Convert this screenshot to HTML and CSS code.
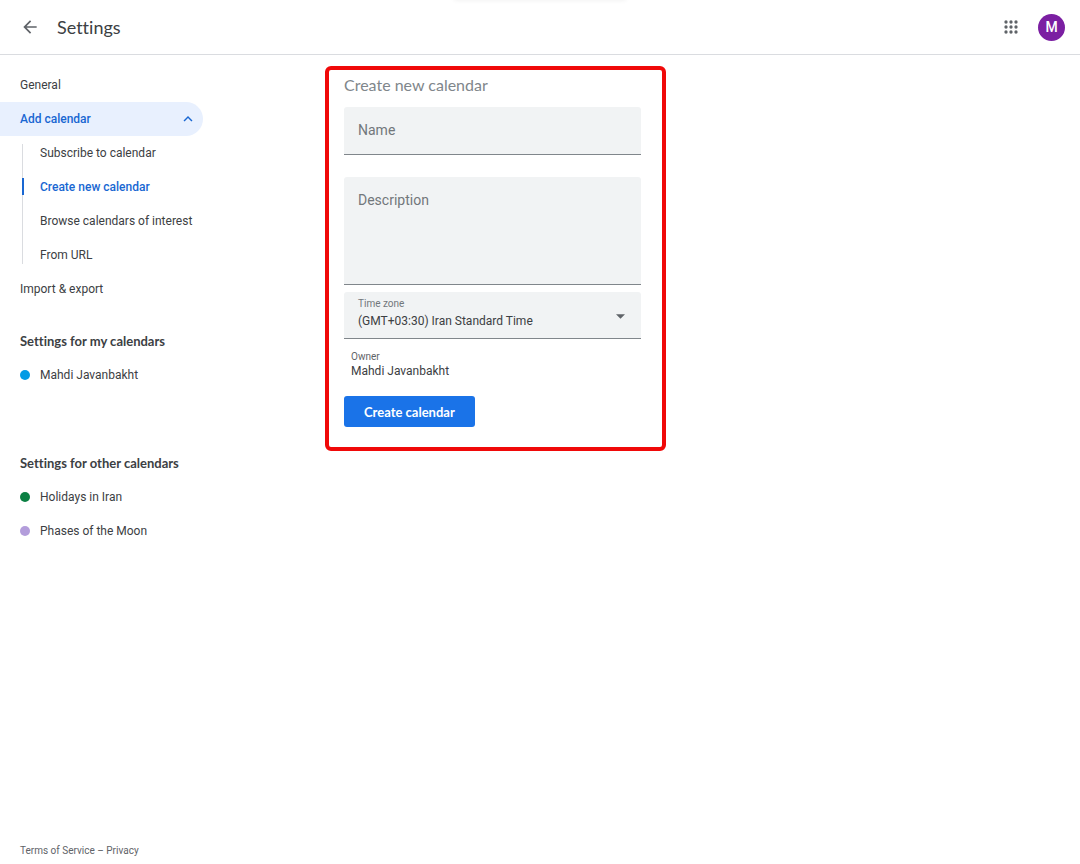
FILE: index.html
```html
<!DOCTYPE html>
<html lang="en">
<head>
  <meta charset="UTF-8" />
  <meta name="viewport" content="width=device-width, initial-scale=1" />
  <title>Settings</title>
  <link rel="stylesheet" href="styles.css">
</head>
<body>

  <header>
    <button class="icon-btn" type="button" aria-label="Go back">
      <svg class="back" viewBox="0 0 24 24"><path d="M20 11H7.83l5.59-5.59L12 4l-8 8 8 8 1.41-1.41L7.83 13H20v-2z"/></svg>
    </button>
    <h1>Settings</h1>
    <button class="icon-btn apps" type="button" aria-label="Apps">
      <svg viewBox="0 0 24 24">
        <circle cx="6" cy="6" r="2"/><circle cx="12" cy="6" r="2"/><circle cx="18" cy="6" r="2"/>
        <circle cx="6" cy="12" r="2"/><circle cx="12" cy="12" r="2"/><circle cx="18" cy="12" r="2"/>
        <circle cx="6" cy="18" r="2"/><circle cx="12" cy="18" r="2"/><circle cx="18" cy="18" r="2"/>
      </svg>
    </button>
    <button class="avatar" type="button">M</button>
  </header>

  <div class="page">
    <aside>
      <nav>
        <a class="item" href="#general">General</a>
        <a class="item open" href="#add">Add calendar
          <svg viewBox="0 0 24 24"><path d="M12 8l-6 6 1.41 1.41L12 10.83l4.59 4.58L18 14z"/></svg>
        </a>
        <div class="sub">
          <a class="item" href="#subscribe">Subscribe to calendar</a>
          <a class="item current" href="#create">Create new calendar</a>
          <a class="item" href="#browse">Browse calendars of interest</a>
          <a class="item" href="#url">From URL</a>
        </div>
        <a class="item" href="#import">Import &amp; export</a>

        <h2>Settings for my calendars</h2>
        <a class="item" href="#mine"><span class="dot blue"></span>Mahdi Javanbakht</a>

        <h2 class="other">Settings for other calendars</h2>
        <a class="item" href="#holidays"><span class="dot green"></span>Holidays in Iran</a>
        <a class="item" href="#moon"><span class="dot purple"></span>Phases of the Moon</a>
      </nav>
      <footer><a href="#terms">Terms of Service</a> – <a href="#privacy">Privacy</a></footer>
    </aside>

    <main>
      <form class="panel">
        <h2>Create new calendar</h2>
        <div class="field name">
          <label for="name">Name</label>
          <input id="name" type="text" />
        </div>
        <div class="field description">
          <label for="description">Description</label>
          <textarea id="description"></textarea>
        </div>
        <div class="field zone">
          <label for="zone">Time zone</label>
          <select id="zone">
            <option>(GMT+03:30) Iran Standard Time</option>
          </select>
          <svg viewBox="0 0 10 5"><path d="M0 0h10L5 5z"/></svg>
        </div>
        <dl class="owner">
          <dt>Owner</dt>
          <dd>Mahdi Javanbakht</dd>
        </dl>
        <button class="create" type="button">Create calendar</button>
      </form>
    </main>
  </div>

</body>
</html>
```

FILE: styles.css
```css
:root {
  --text: #3c4043;
  --muted: #5f6368;
  --blue: #1a73e8;
  --link: #1967d2;
  --field: #f1f3f4;
  --line: #dadce0;
  --heading-font: Lato, "Open Sans", sans-serif;
}

* {
  box-sizing: border-box;
}

body {
  margin: 0;
  min-height: 100vh;
  display: flex;
  flex-direction: column;
  font-family: Roboto, Arial, sans-serif;
  font-size: 12px;
  line-height: 16px;
  color: var(--text);
  background: #fff;
}

a {
  color: inherit;
  text-decoration: none;
}

button {
  border: none;
  padding: 0;
  cursor: pointer;
}

h1, h2 {
  margin: 0;
  font-family: var(--heading-font);
  font-variant-ligatures: none;
}

header {
  position: relative;
  display: flex;
  align-items: center;
  height: 55px;
  padding: 0 15px 0 20px;
  border-bottom: 1px solid var(--line);
}

header::before {
  content: "";
  position: absolute;
  top: -2px;
  left: 42%;
  width: 16%;
  height: 2px;
  box-shadow: 0 0 4px rgba(0, 0, 0, 0.1);
}

header h1 {
  margin-left: 17px;
  font-size: 18px;
  line-height: 24px;
  font-weight: 400;
}

.icon-btn {
  display: flex;
  background: none;
}

.icon-btn svg {
  width: 20px;
  height: 20px;
  fill: var(--muted);
}

.apps {
  margin-left: auto;
}

.avatar {
  width: 27px;
  height: 27px;
  margin-left: 17px;
  border-radius: 50%;
  background: #7b1fa2;
  color: #fff;
  font: 500 14px Roboto, sans-serif;
}

.page {
  flex: 1;
  display: flex;
}

aside {
  width: 203px;
  padding: 13px 0 5px;
  display: flex;
  flex-direction: column;
  justify-content: space-between;
}

.item {
  display: flex;
  align-items: center;
  height: 34px;
  padding: 0 0 1px 20px;
  font-size: 12px;
  white-space: nowrap;
}

.open {
  justify-content: space-between;
  padding-right: 6px;
  border-radius: 0 17px 17px 0;
  background: #e8f0fe;
  color: var(--link);
  font-weight: 500;
}

.open svg {
  width: 18px;
  height: 18px;
  fill: var(--link);
}

.sub {
  margin-left: 20px;
  position: relative;
}

.sub::before {
  content: "";
  position: absolute;
  top: 8px;
  bottom: 8px;
  left: 2px;
  width: 1px;
  background: var(--line);
}

.current {
  position: relative;
  color: var(--link);
  font-weight: 500;
}

.current::before {
  content: "";
  position: absolute;
  top: 8px;
  bottom: 9px;
  left: 2px;
  width: 2px;
  background: var(--link);
}

nav h2 {
  margin-top: 18px;
  padding-left: 20px;
  font-size: 13px;
  line-height: 34px;
  font-weight: 700;
}

nav h2.other {
  margin-top: 54px;
}

.dot {
  width: 10px;
  height: 10px;
  margin-right: 10px;
  border-radius: 50%;
}

.blue { background: #039be5; }
.green { background: #0b8043; }
.purple { background: #b39ddb; }

footer {
  padding-left: 20px;
  font-size: 10px;
  color: var(--muted);
}

main {
  flex: 1;
  padding: 11px 20px 20px 122px;
}

.panel {
  max-width: 341px;
  padding: 3px 21px 20px 15px;
  border: 4px solid #f00909;
  border-radius: 6px;
}

.panel h2 {
  margin-bottom: 10px;
  font-size: 16px;
  line-height: 24px;
  font-weight: 400;
  color: #80868b;
}

.field {
  position: relative;
}

.field input,
.field textarea,
.field select {
  display: block;
  width: 100%;
  height: 48px;
  padding: 0 14px;
  border: none;
  border-bottom: 1px solid #80868b;
  border-radius: 3px 3px 0 0;
  background: var(--field);
  color: var(--text);
  font: 12px Roboto, sans-serif;
  appearance: none;
  resize: none;
}

.field label {
  position: absolute;
  top: 15px;
  left: 14px;
  font-size: 14px;
  color: #72777b;
}

.description {
  margin: 22px 0 7px;
}

.field textarea {
  height: 108px;
  padding-top: 32px;
}

.field select {
  height: 47px;
  padding-top: 12px;
}

.field.zone label {
  top: 4px;
  font-size: 10px;
}

.zone svg {
  position: absolute;
  top: 22px;
  right: 16px;
  width: 9px;
  height: 5px;
  fill: var(--muted);
}

.owner {
  margin: 11px 7px 18px;
  line-height: 14px;
}

.owner dt {
  font-size: 10px;
  color: var(--muted);
}

.owner dd {
  margin: 0;
}

.create {
  height: 31px;
  padding: 0 20px;
  border-radius: 3px;
  background: var(--blue);
  color: #fff;
  font: 700 13px var(--heading-font);
}
```
